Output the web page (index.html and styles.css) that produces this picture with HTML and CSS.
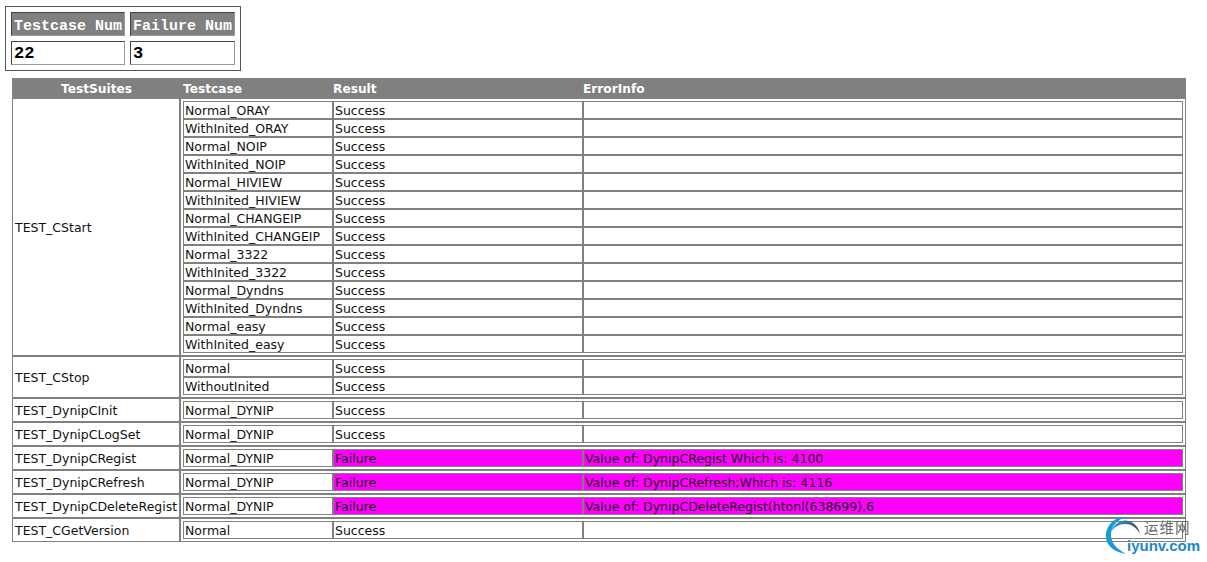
FILE: index.html
```html
<!DOCTYPE html>
<html>
<head>
<meta charset="utf-8">
<title>Test Report</title>
<link rel="stylesheet" href="styles.css">
</head>
<body>
<table class="summary">
<tr><th>Testcase Num</th><th>Failure Num</th></tr>
<tr><td>22</td><td>3</td></tr>
</table>
<table class="report">
<tr class="head">
<th class="suite">TestSuites</th>
<th class="cases"><table class="inner"><tr><th class="c1">Testcase</th><th class="c2">Result</th><th class="c3">ErrorInfo</th></tr></table></th>
</tr>
<tr><td class="suite">TEST_CStart</td><td class="cases"><table class="inner">
<tr><td class="c1">Normal_ORAY</td><td class="c2">Success</td><td class="c3"></td></tr>
<tr><td class="c1">WithInited_ORAY</td><td class="c2">Success</td><td class="c3"></td></tr>
<tr><td class="c1">Normal_NOIP</td><td class="c2">Success</td><td class="c3"></td></tr>
<tr><td class="c1">WithInited_NOIP</td><td class="c2">Success</td><td class="c3"></td></tr>
<tr><td class="c1">Normal_HIVIEW</td><td class="c2">Success</td><td class="c3"></td></tr>
<tr><td class="c1">WithInited_HIVIEW</td><td class="c2">Success</td><td class="c3"></td></tr>
<tr><td class="c1">Normal_CHANGEIP</td><td class="c2">Success</td><td class="c3"></td></tr>
<tr><td class="c1">WithInited_CHANGEIP</td><td class="c2">Success</td><td class="c3"></td></tr>
<tr><td class="c1">Normal_3322</td><td class="c2">Success</td><td class="c3"></td></tr>
<tr><td class="c1">WithInited_3322</td><td class="c2">Success</td><td class="c3"></td></tr>
<tr><td class="c1">Normal_Dyndns</td><td class="c2">Success</td><td class="c3"></td></tr>
<tr><td class="c1">WithInited_Dyndns</td><td class="c2">Success</td><td class="c3"></td></tr>
<tr><td class="c1">Normal_easy</td><td class="c2">Success</td><td class="c3"></td></tr>
<tr><td class="c1">WithInited_easy</td><td class="c2">Success</td><td class="c3"></td></tr>
</table></td></tr>
<tr><td class="suite">TEST_CStop</td><td class="cases"><table class="inner">
<tr><td class="c1">Normal</td><td class="c2">Success</td><td class="c3"></td></tr>
<tr><td class="c1">WithoutInited</td><td class="c2">Success</td><td class="c3"></td></tr>
</table></td></tr>
<tr><td class="suite">TEST_DynipCInit</td><td class="cases"><table class="inner">
<tr><td class="c1">Normal_DYNIP</td><td class="c2">Success</td><td class="c3"></td></tr>
</table></td></tr>
<tr><td class="suite">TEST_DynipCLogSet</td><td class="cases"><table class="inner">
<tr><td class="c1">Normal_DYNIP</td><td class="c2">Success</td><td class="c3"></td></tr>
</table></td></tr>
<tr><td class="suite">TEST_DynipCRegist</td><td class="cases"><table class="inner">
<tr><td class="c1">Normal_DYNIP</td><td class="c2 fail">Failure</td><td class="c3 fail">Value of: DynipCRegist Which is: 4100</td></tr>
</table></td></tr>
<tr><td class="suite">TEST_DynipCRefresh</td><td class="cases"><table class="inner">
<tr><td class="c1">Normal_DYNIP</td><td class="c2 fail">Failure</td><td class="c3 fail">Value of: DynipCRefresh;Which is: 4116</td></tr>
</table></td></tr>
<tr><td class="suite">TEST_DynipCDeleteRegist</td><td class="cases"><table class="inner">
<tr><td class="c1">Normal_DYNIP</td><td class="c2 fail">Failure</td><td class="c3 fail">Value of: DynipCDeleteRegist(htonl(638699),6</td></tr>
</table></td></tr>
<tr><td class="suite">TEST_CGetVersion</td><td class="cases"><table class="inner">
<tr><td class="c1">Normal</td><td class="c2">Success</td><td class="c3"></td></tr>
</table></td></tr>
</table>
<div class="mark">
<svg class="mark-logo" width="50" height="44" viewBox="0 0 50 44">
<defs>
<linearGradient id="arcTop" x1="0" y1="0" x2="1" y2="0">
<stop offset="0" stop-color="#1c9ad6"/>
<stop offset="1" stop-color="#3f5566"/>
</linearGradient>
</defs>
<path d="M26 3 C12 3 5 14 6 24 C7 32 14 38 26 40 C17 35 11 29 11 21 C11 12 17 6 26 3Z" fill="#1c9ad6"/>
<path d="M11 18 C14 9 22 5 29 7 C35 9 39 14 40 20 C36 13 31 10 25 10 C19 10 14 13 11 18Z" fill="url(#arcTop)"/>
</svg>
<span class="mark-cn">运维网</span>
<span class="mark-en">iyunv.com</span>
</div>
</body>
</html>
```
FILE: styles.css
```css
html, body { margin: 0; padding: 0; background: #fff; }
body { padding: 6px 0 0 5px; font-family: "DejaVu Sans", sans-serif; font-size: 12.5px; color: #111; position: relative; height: 556px; box-sizing: border-box; overflow: hidden; }
table { border-spacing: 0; }

.summary { border: 1px solid #555; border-spacing: 5px; font-family: "Liberation Mono", monospace; font-weight: bold; }
.summary th, .summary td { border: 1px solid; border-color: #444 #999 #999 #444; text-align: left; box-sizing: border-box; }
.summary th { background: #808080; color: #fff; height: 24px; padding: 5px 1px 0 2px; font-size: 15px; line-height: 17px; white-space: nowrap; }
.summary td { height: 24px; padding: 2px 1px 0 2px; font-size: 17px; line-height: 20px; color: #000; }
.summary th:first-child, .summary td:first-child { width: 114px; }
.summary th:last-child, .summary td:last-child { width: 105px; }

.report { width: 1174px; margin: 7px 0 0 7px; table-layout: fixed; }
.report > tbody > tr > td, .report > tbody > tr > th { border: 1px solid #808080; padding: 2px; }
.report .suite { width: 168px; box-sizing: border-box; white-space: nowrap; }
.report td.suite { padding: 0 0 0 2px; }
.report .cases { box-sizing: border-box; }
.report .head > th { background: #808080; color: #fff; padding: 2px 2px 0; height: 20px; box-sizing: border-box; font-size: 12.2px; line-height: 16px; }
.report .head > th.suite { padding-left: 3px; }
.inner { width: 1000px; table-layout: fixed; }
.inner td { border: 1px solid #808080; height: 18px; box-sizing: border-box; padding: 2px 0 0 1px; white-space: nowrap; overflow: hidden; line-height: 14px; }
.inner th { text-align: left; padding: 0; height: 16px; }
.c1 { width: 150px; }
.c2 { width: 250px; }
.c3 { width: 600px; }
.inner td.fail { background: #ff00ff; }

.mark { position: absolute; left: 1100px; top: 514px; width: 107px; height: 48px; }
.mark-logo { position: absolute; left: 0; top: 0; }
.mark-cn { position: absolute; left: 44px; top: 6px; font-family: "Noto Sans CJK SC", sans-serif; font-size: 14.5px; letter-spacing: 1px; line-height: 14px; color: #6a6a6a; }
.mark-en { position: absolute; left: 27px; top: 24px; font-family: "Liberation Sans", sans-serif; font-size: 15px; font-weight: bold; line-height: 16px; color: #1c86c8; }
```
